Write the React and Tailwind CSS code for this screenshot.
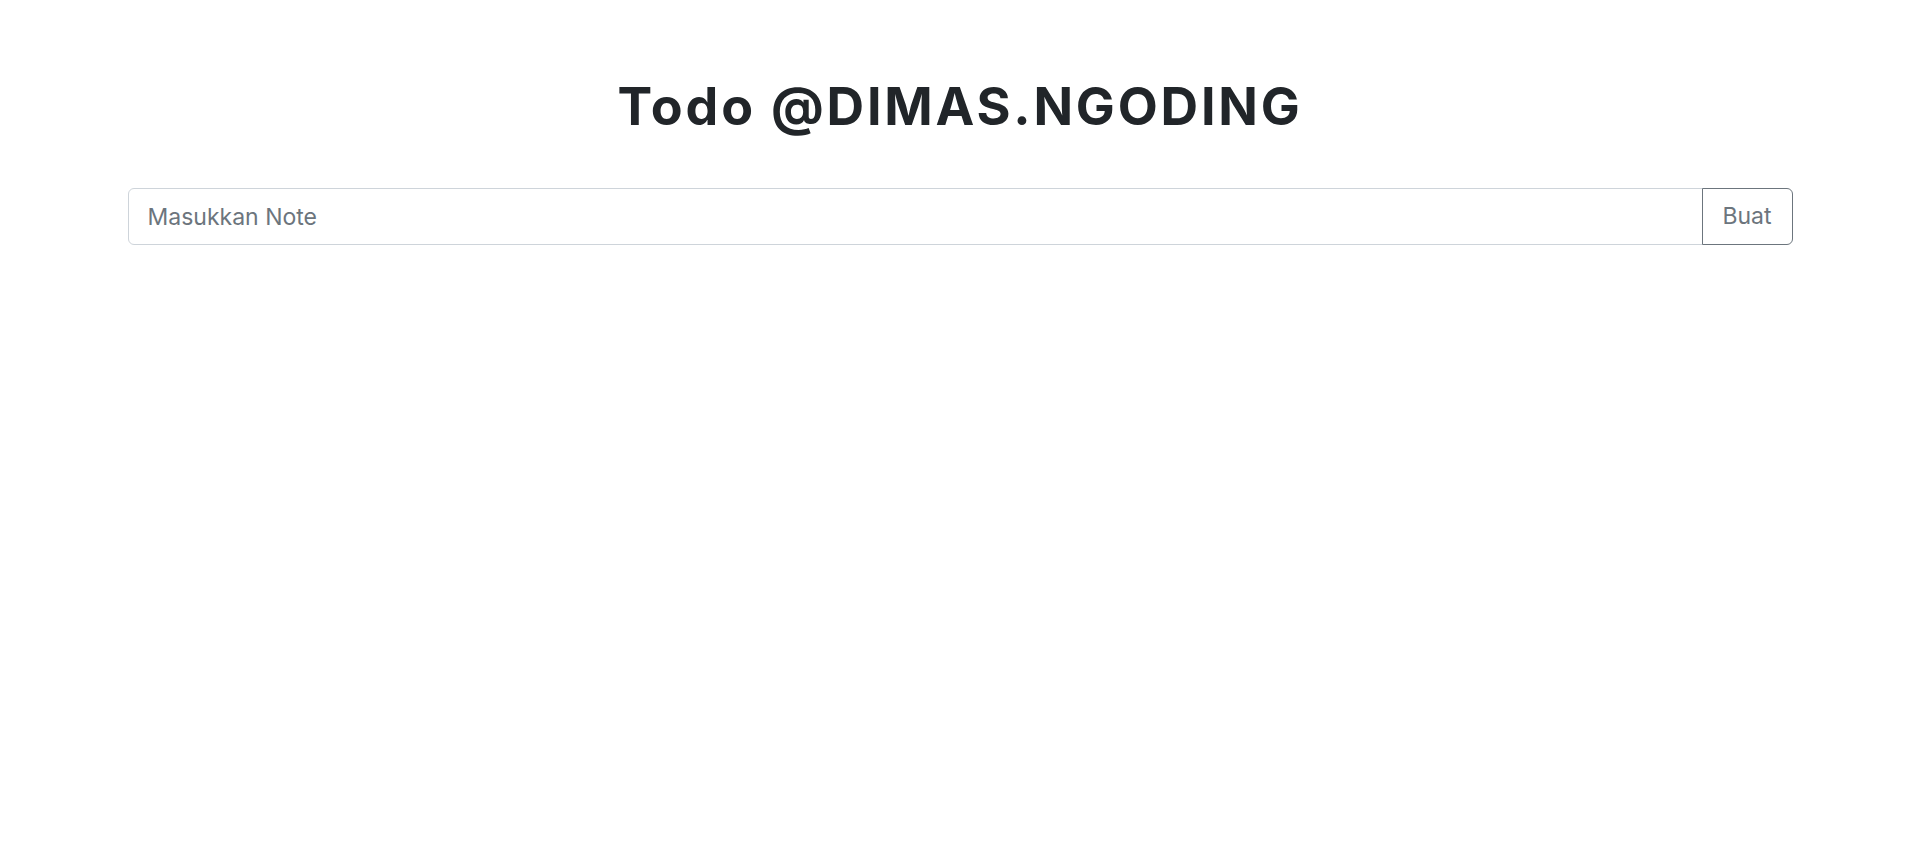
export default function App() {
  return (
    <div className="min-h-screen bg-white" style={{ fontFamily: 'Inter, "Noto Sans", sans-serif' }}>
      <div className="w-[1665px] mx-auto pt-[77px]">
        {/* Title */}
        <h1 className="text-center text-[52px] leading-[60px] font-bold tracking-[2.8px] text-[#212529]">
          Todo @DIMAS.NGODING
        </h1>

        {/* Input row */}
        <div className="flex mt-[51px] h-[57px]">
          <input
            type="text"
            placeholder="Masukkan Note"
            className="flex-1 h-full px-[19px] text-[23px] text-[#495057] placeholder:text-[#6c757d] border border-[#ced4da] rounded-l-[6px] outline-none"
          />
          <button className="w-[91px] h-full text-[23px] text-[#6c757d] border border-[#6c757d] rounded-r-[6px] -ml-px bg-white">
            Buat
          </button>
        </div>
      </div>
    </div>
  );
}
